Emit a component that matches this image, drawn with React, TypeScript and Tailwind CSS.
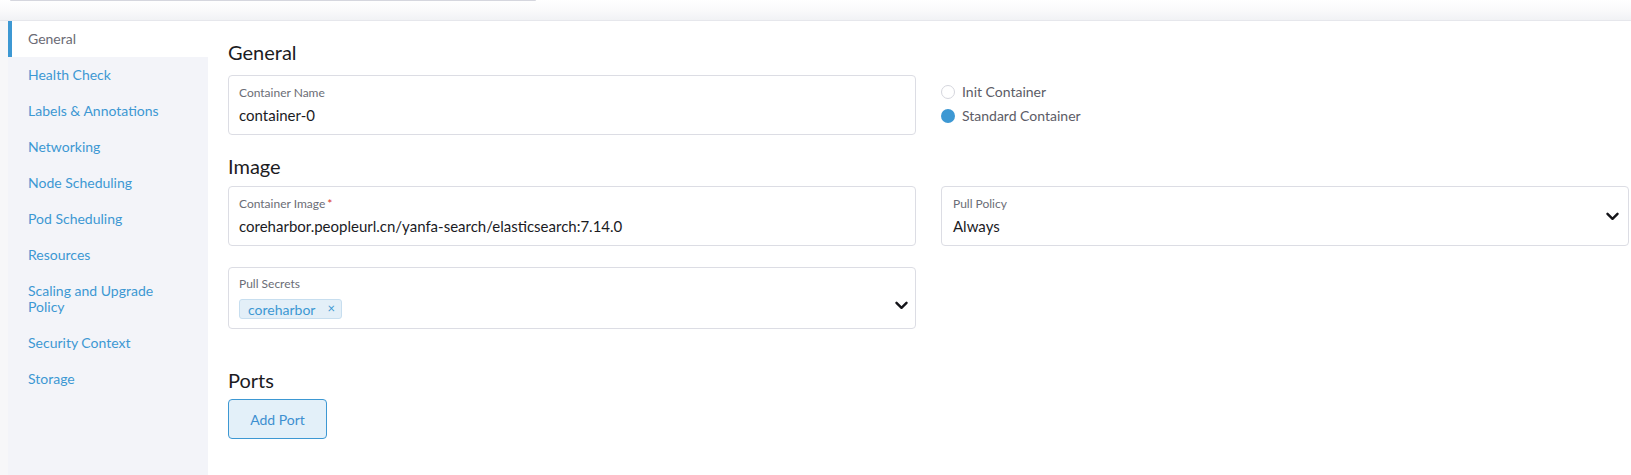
import { useState } from 'react';

const tabs = [
  'General',
  'Health Check',
  'Labels & Annotations',
  'Networking',
  'Node Scheduling',
  'Pod Scheduling',
  'Resources',
  'Scaling and Upgrade Policy',
  'Security Context',
  'Storage',
];

function Chevron() {
  return (
    <svg width="13" height="9" viewBox="0 0 13 9" fill="none" className="shrink-0">
      <path d="M1.5 1.8L6.5 6.8L11.5 1.8" stroke="#141419" strokeWidth="2.4" strokeLinecap="round" strokeLinejoin="round" />
    </svg>
  );
}

function Field({ label, value, required }: { label: string; value: string; required?: boolean }) {
  return (
    <div className="h-[60px] rounded-[4px] border border-[#dcdde4] bg-white px-[10px] pt-[10px]">
      <div className="text-[12px] leading-[14px] text-[#6b6d76]">
        {label}
        {required && <span className="ml-[2px] text-[#d9342b]">*</span>}
      </div>
      <div className="mt-[5px] text-[15px] leading-[20px] text-[#1b1b1f]">{value}</div>
    </div>
  );
}

export default function App() {
  const [active, setActive] = useState('General');
  const [kind, setKind] = useState('standard');
  const [secrets, setSecrets] = useState(['coreharbor']);

  return (
    <div className="flex h-[475px] flex-col overflow-hidden bg-white font-['Lato','Noto_Sans',sans-serif]">
      {/* top band */}
      <div className="h-[21px] shrink-0 border-b border-[#e6e7ec] bg-gradient-to-b from-white via-[#fafafb] to-[#f1f2f5]">
        <div className="ml-[10px] h-[1px] w-[526px] rounded-b bg-[#d5d6de]" />
      </div>

      <div className="flex flex-1 bg-[#f7f7f9] pl-[8px]">
        {/* sidebar */}
        <nav className="w-[200px] shrink-0 bg-[#f3f4f9]">
          {tabs.map((t) => (
            <button
              key={t}
              onClick={() => setActive(t)}
              className={`block w-full border-l-4 py-[10px] pl-[16px] pr-[30px] text-left text-[14px] leading-[16px] ${
                active === t ? 'border-[#3d98d3] bg-white text-[#6b6b75]' : 'border-transparent text-[#3d98d3]'
              }`}
            >
              {t}
            </button>
          ))}
        </nav>

        {/* main */}
        <main className="flex-1 bg-white pl-[20px] pr-[2px] pt-[17px]">
          <h3 className="text-[20px] leading-[28px] text-[#1c1c1f]">General</h3>
          <div className="mt-[9px] grid grid-cols-2 gap-[25px]">
            <Field label="Container Name" value="container-0" />
            <div className="flex flex-col pt-[5px] text-[14px] leading-[24px] text-[#5c5c66]">
              {[
                ['init', 'Init Container'],
                ['standard', 'Standard Container'],
              ].map(([k, l]) => (
                <label key={k} className="flex items-center gap-[7px]" onClick={() => setKind(k)}>
                  <span
                    className={`h-[14px] w-[14px] rounded-full ${
                      kind === k ? 'bg-[#3d98d3]' : 'border border-[#d5d6dd] bg-white'
                    }`}
                  />
                  {l}
                </label>
              ))}
            </div>
          </div>

          <h3 className="mt-[17px] text-[20px] leading-[28px] text-[#1c1c1f]">Image</h3>
          <div className="mt-[6px] grid grid-cols-2 gap-[25px]">
            <Field label="Container Image" value="coreharbor.peopleurl.cn/yanfa-search/elasticsearch:7.14.0" required />
            <div className="flex h-[60px] items-center rounded-[4px] border border-[#dcdde4] bg-white pl-[11px] pr-[9px]">
              <div className="flex-1">
                <div className="text-[12px] leading-[14px] text-[#6b6d76]">Pull Policy</div>
                <div className="mt-[5px] text-[15px] leading-[20px] text-[#1b1b1f]">Always</div>
              </div>
              <Chevron />
            </div>
          </div>

          <div className="mt-[21px] grid grid-cols-2 gap-[25px]">
            <div className="flex h-[62px] items-center rounded-[4px] border border-[#dcdde4] bg-white pl-[10px] pr-[7px]">
              <div className="flex-1">
                <div className="text-[12px] leading-[14px] text-[#6b6d76]">Pull Secrets</div>
                <div className="mt-[8px] flex gap-[4px]">
                  {secrets.map((s) => (
                    <span
                      key={s}
                      className="flex h-[20px] items-center rounded-[3px] border border-[#c7deef] bg-[#e3eff8] pl-[8px] pr-[6px] text-[14px] text-[#3d98d3]"
                    >
                      {s}
                      <button onClick={() => setSecrets(secrets.filter((x) => x !== s))} className="ml-[12px] text-[13px]">
                        ×
                      </button>
                    </span>
                  ))}
                </div>
              </div>
              <div className="mt-[14px]">
                <Chevron />
              </div>
            </div>
            <div />
          </div>

          <h3 className="mt-[37px] text-[20px] leading-[28px] text-[#1c1c1f]">Ports</h3>
          <button className="mt-[5px] h-[40px] w-[99px] rounded-[4px] border border-[#3d98d3] bg-[#e3f0f9] text-[14px] text-[#3d8fd0]">
            Add Port
          </button>
        </main>
      </div>
    </div>
  );
}
